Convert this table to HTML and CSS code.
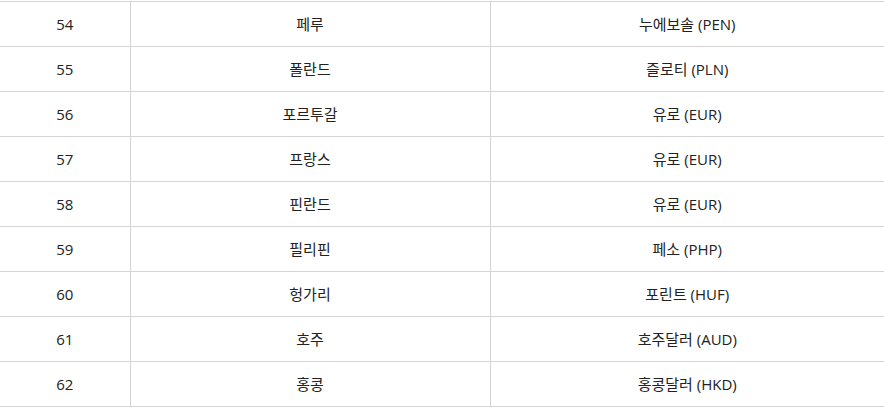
FILE: index.html
```html
<!DOCTYPE html>
<html lang="ko">
<head>
<meta charset="utf-8">
<link rel="stylesheet" href="styles.css">
</head>
<body>
<table class="tbl">
  <colgroup><col class="c1"><col class="c2"><col class="c3"></colgroup>
  <tbody>
    <tr><td>54</td><td>페루</td><td>누에보솔 (PEN)</td></tr>
    <tr><td>55</td><td>폴란드</td><td>즐로티 (PLN)</td></tr>
    <tr><td>56</td><td>포르투갈</td><td>유로 (EUR)</td></tr>
    <tr><td>57</td><td>프랑스</td><td>유로 (EUR)</td></tr>
    <tr><td>58</td><td>핀란드</td><td>유로 (EUR)</td></tr>
    <tr><td>59</td><td>필리핀</td><td>페소 (PHP)</td></tr>
    <tr><td>60</td><td>헝가리</td><td>포린트 (HUF)</td></tr>
    <tr><td>61</td><td>호주</td><td>호주달러 (AUD)</td></tr>
    <tr><td>62</td><td>홍콩</td><td>홍콩달러 (HKD)</td></tr>
  </tbody>
</table>
</body>
</html>
```
FILE: styles.css
```css
html, body { margin: 0; padding: 0; background: #fff; }
body { padding-top: 1px; }
.tbl {
  width: 884px;
  border-collapse: collapse;
  table-layout: fixed;
  font-family: "Open Sans", "Noto Sans CJK KR", sans-serif;
  font-size: 15px;
  line-height: 20px;
  color: #222;
}
.c1 { width: 130px; }
.c2 { width: 360px; }
.c3 { width: 394px; }
.tbl td {
  height: 44px;
  padding: 0;
  text-align: center;
  vertical-align: middle;
  border-top: 1px solid #d5d5d5;
  border-bottom: 1px solid #d5d5d5;
  border-left: 1px solid #d5d5d5;
}
.tbl td:first-child { border-left: none; }
```
